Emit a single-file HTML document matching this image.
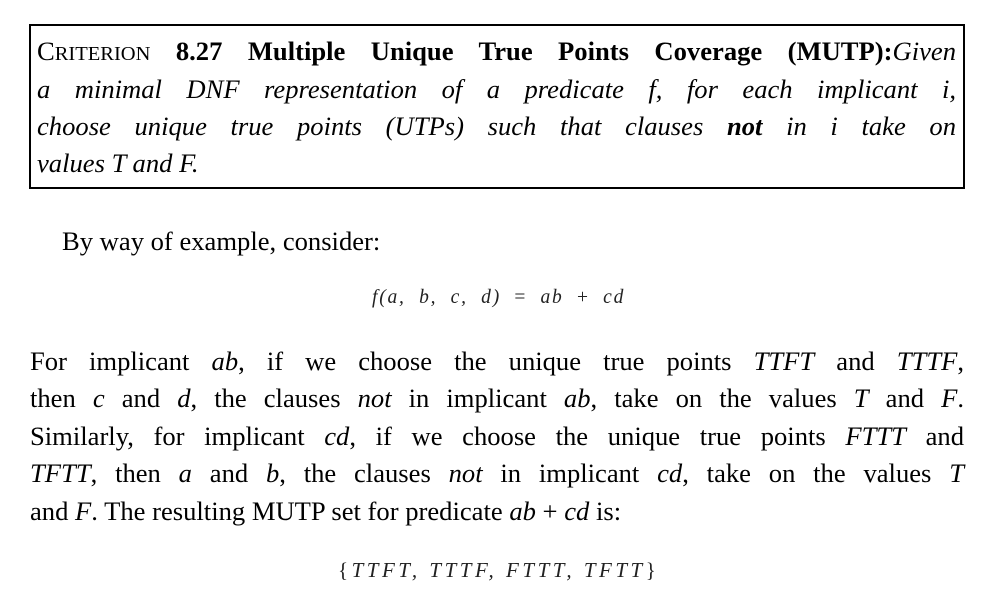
<!DOCTYPE html>
<html><head><style>
body{margin:0;width:1000px;height:608px;background:#fff;font-family:"Liberation Serif",serif;font-size:26.6px;color:#000;position:relative;overflow:hidden}
.box{position:absolute;left:29px;top:24px;width:932px;height:161px;border:2px solid #000}
.l{position:absolute;line-height:37px;white-space:nowrap;text-align:justify;text-align-last:justify}
.b .l{left:37px;width:919px}
.p .l{left:30px;width:934px}
.sc{font-size:20.5px}
.m{position:absolute;font-family:"Liberation Serif",serif;font-style:italic;color:#222;white-space:pre}
</style></head><body>
<div class="box"></div>
<div class="b">
<div class="l" style="top:33px">C<span class="sc">RITERION</span> <b>8.27 Multiple Unique True Points Coverage (MUTP):</b><i>Given</i></div>
<div class="l" style="top:71px"><i>a minimal DNF representation of a predicate f, for each implicant i,</i></div>
<div class="l" style="top:108px"><i>choose unique true points (UTPs) such that clauses <b>not</b> in i take on</i></div>
<div class="l" style="top:145px;text-align-last:left"><i>values T and F.</i></div>
</div>
<div class="l" style="top:223px;left:62px;text-align-last:left">By way of example, consider:</div>
<div class="m" style="left:372px;top:287px;font-size:19.5px;letter-spacing:1.8px">f(a,  b,  c,  d)  <span style="font-style:normal">=</span>  ab  <span style="font-style:normal">+</span>  cd</div>
<div class="p">
<div class="l" style="top:343px">For implicant <i>ab</i>, if we choose the unique true points <i>TTFT</i> and <i>TTTF</i>,</div>
<div class="l" style="top:380px">then <i>c</i> and <i>d</i>, the clauses <i>not</i> in implicant <i>ab</i>, take on the values <i>T</i> and <i>F</i>.</div>
<div class="l" style="top:418px">Similarly, for implicant <i>cd</i>, if we choose the unique true points <i>FTTT</i> and</div>
<div class="l" style="top:455px"><i>TFTT</i>, then <i>a</i> and <i>b</i>, the clauses <i>not</i> in implicant <i>cd</i>, take on the values <i>T</i></div>
<div class="l" style="top:493px;text-align-last:left">and <i>F</i>. The resulting MUTP set for predicate <i>ab</i> + <i>cd</i> is:</div>
</div>
<div class="m" style="left:338px;top:558px;font-size:21px;letter-spacing:3.5px"><span style="font-style:normal">{</span>TTFT, TTTF, FTTT, TFTT<span style="font-style:normal">}</span></div>
</body></html>
